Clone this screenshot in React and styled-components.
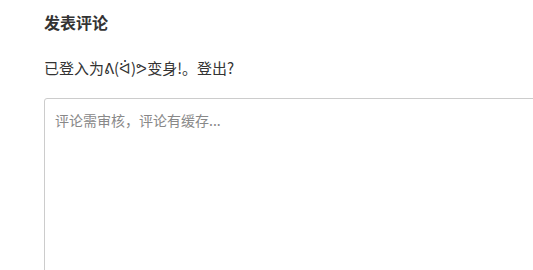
import React from 'react';
import styled, { createGlobalStyle } from 'styled-components';

const GlobalStyle = createGlobalStyle`
  html, body {
    margin: 0;
    padding: 0;
    background: #fff;
    overflow: hidden;
  }
  body {
    font-family: "Noto Sans CJK SC", "Noto Sans", sans-serif;
    color: #333;
  }
`;

export default function App() {
  return (
    <>
      <GlobalStyle />
      <Respond>
        <Title>发表评论</Title>
        <LoggedIn>
          已登入为<UserLink href="#">ᕕ(ᐛ)ᕗ变身!</UserLink>。<LogoutLink href="#">登出?</LogoutLink>
        </LoggedIn>
        <CommentBox placeholder="评论需审核，评论有缓存..." />
      </Respond>
    </>
  );
}

const Respond = styled.div`
  display: flex;
  flex-direction: column;
  align-items: flex-start;
  padding: 10px 0 0 44px;
  width: 560px;
`;

const Title = styled.h3`
  margin: 0;
  font-size: 16px;
  font-weight: 700;
  line-height: 24px;
  color: #333;
`;

const LoggedIn = styled.p`
  margin: 22px 0 0;
  font-size: 15px;
  line-height: 24px;
  color: #333;
`;

const UserLink = styled.a`
  color: #333;
  text-decoration: none;
`;

const LogoutLink = styled.a`
  color: #333;
  text-decoration: none;
`;

const CommentBox = styled.textarea`
  box-sizing: border-box;
  margin-top: 18px;
  width: 100%;
  height: 200px;
  padding: 11px 10px;
  border: 1px solid #ccc;
  border-radius: 3px;
  font-family: inherit;
  font-size: 14px;
  line-height: 20px;
  color: #333;
  resize: none;
  outline: none;

  &::placeholder {
    color: #888;
  }
`;
